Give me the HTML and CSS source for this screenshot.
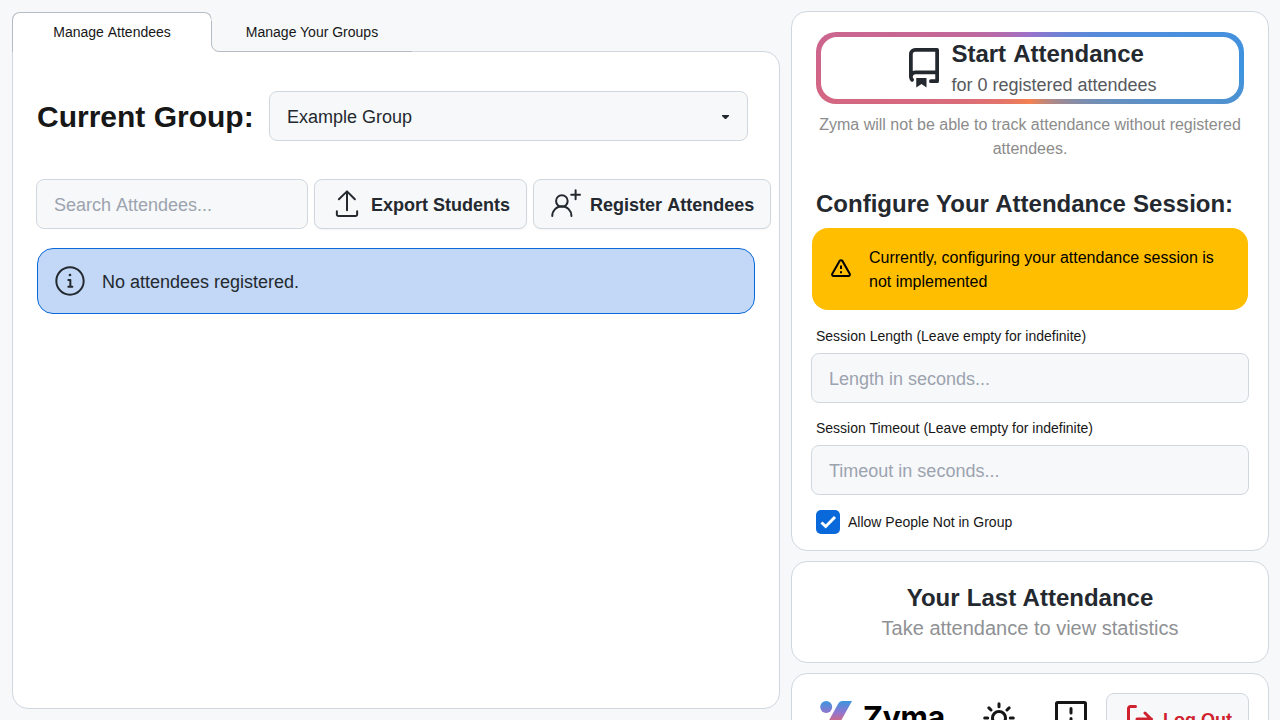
FILE: index.html
```html
<!DOCTYPE html>
<html lang="en">
<head>
<meta charset="utf-8">
<title>Zyma</title>
<link rel="stylesheet" href="styles.css">
</head>
<body>
<main class="main">
  <nav class="tabs">
    <a class="tab tab-active">Manage Attendees<svg class="tab-curve" width="10" height="40"><path d="M0 0V40H10V39.5H8A7.5 7.5 0 0 1 .5 32V0Z" fill="#fff"/><path d="M.5 9V32A7.5 7.5 0 0 0 8 39.5H10" fill="none" stroke="#b6bcc3"/></svg></a>
    <a class="tab tab-plain">Manage Your Groups</a>
  </nav>
  <section class="panel attendees">
    <div class="group-row">
      <h1 class="group-title">Current Group:</h1>
      <div class="field select">Example Group<svg width="8" height="5"><path d="M0 0H7V1L4 4H3L0 1Z" fill="#24292f"/></svg></div>
    </div>
    <div class="toolbar">
      <input class="field search" placeholder="Search Attendees...">
      <button class="btn export"><svg class="icon32" viewBox="0 0 24 24"><path d="M12 15.900V2.100M5.900 7.700 12 1.800l5.9 5.9M4.400 16.600v2.500a1.2 1.2 0 0 0 1.2 1.2h12.800a1.2 1.2 0 0 0 1.2-1.2V16.600"/></svg>Export Students</button>
      <button class="btn register"><svg class="icon32" viewBox="0 0 24 24"><circle cx="8.9" cy="9" r="4.35"/><path d="M1.700 20.2a7.2 7.2 0 0 1 14.4 0M19.200 1v6.6M15.900 4.3h6.6"/></svg>Register Attendees</button>
    </div>
    <div class="info">
      <svg width="32" height="32" viewBox="0 0 24 24" fill="#24292f"><path d="M13 7.5a1 1 0 1 1-2 0 1 1 0 0 1 2 0Zm-3 3.75a.75.75 0 0 1 .75-.75h1.5a.75.75 0 0 1 .75.75v4.25h.75a.75.75 0 0 1 0 1.5h-3a.75.75 0 0 1 0-1.5h.75V12h-.75a.75.75 0 0 1-.75-.75Z"/><path d="M12 1c6.075 0 11 4.925 11 11s-4.925 11-11 11S1 18.075 1 12 5.925 1 12 1ZM2.5 12a9.5 9.5 0 0 0 9.5 9.5 9.5 9.5 0 0 0 9.5-9.5A9.5 9.5 0 0 0 12 2.5 9.5 9.5 0 0 0 2.5 12Z"/></svg>
      <span class="info-text">No attendees registered.</span>
    </div>
  </section>
</main>
<aside class="side">
  <section class="panel session">
    <div class="start-ring">
      <button class="start">
        <svg width="40" height="40" viewBox="0 0 16 16" fill="#24292f"><path d="M2 2.5A2.5 2.5 0 0 1 4.5 0h8.75a.75.75 0 0 1 .75.75v12.5a.75.75 0 0 1-.75.75h-2.5a.75.75 0 0 1 0-1.5h1.75v-2h-8a1 1 0 0 0-.714 1.7.75.75 0 1 1-1.072 1.05A2.495 2.495 0 0 1 2 11.5Zm10.5-1h-8a1 1 0 0 0-1 1v6.708A2.486 2.486 0 0 1 4.5 9h8ZM4.900 12H9v3.750L7 14.400 4.900 15.750Z"/></svg>
        <span class="start-text"><b class="start-title">Start Attendance</b><span class="start-sub">for 0 registered attendees</span></span>
      </button>
    </div>
    <p class="note">Zyma will not be able to track attendance without registered attendees.</p>
    <h2 class="session-title">Configure Your Attendance Session:</h2>
    <div class="warning">
      <svg width="24" height="24" viewBox="0 0 24 24" fill="none" stroke="#000" stroke-width="2"><path d="M10.6 3.900 3.3 16.700c-.6 1.1.1 2.2 1.2 2.2h15c1.1 0 1.8-1.1 1.2-2.2L13.4 3.900c-.7-1-2.1-1-2.8 0Z"/><path d="M12 8.500v3.500M12 14.300v2"/></svg>
      <span class="warning-text">Currently, configuring your attendance session is not implemented</span>
    </div>
    <label class="label">Session Length (Leave empty for indefinite)</label>
    <input class="field wide" placeholder="Length in seconds...">
    <label class="label">Session Timeout (Leave empty for indefinite)</label>
    <input class="field wide" placeholder="Timeout in seconds...">
    <label class="check"><svg width="24" height="24"><rect width="24" height="24" rx="5" fill="#0969da"/><path d="m5.5 12.5 4.2 4L19 7" fill="none" stroke="#fff" stroke-width="3"/></svg>Allow People Not in Group</label>
  </section>
  <section class="panel last">
    <h2 class="last-title">Your Last Attendance</h2>
    <p class="last-sub">Take attendance to view statistics</p>
  </section>
  <footer class="panel footer">
    <svg class="logo" width="32" height="32" viewBox="0 0 32 32"><defs><linearGradient id="g" gradientUnits="userSpaceOnUse" x1="0" y1="0" x2="0" y2="32"><stop offset="0" stop-color="#3a96de"/><stop offset=".36" stop-color="#9076cf"/><stop offset=".62" stop-color="#d06a88"/><stop offset="1" stop-color="#f38151"/></linearGradient></defs><circle cx="6.2" cy="6" r="6" fill="url(#g)"/><path d="M22 0H32L17 27Q14 32 9 32H2L18 3Q19.500 0 22 0Z" fill="url(#g)"/></svg>
    <span class="brand">Zyma</span>
    <svg class="sun" width="32" height="32" viewBox="0 0 32 32" fill="none" stroke="#171717" stroke-width="3" stroke-linecap="round"><circle cx="16" cy="16" r="6.500"/><path d="M16 1.700v3M16 27.300v3M1.700 16h3M27.300 16h3M5.900 5.900 8 8M24 24l2.100 2.100M26.100 5.900 24 8M8 24l-2.100 2.100"/></svg>
    <svg class="report" width="32" height="32" viewBox="0 0 32 32" fill="none" stroke="#171717" stroke-width="3" stroke-linejoin="round"><path d="M2.500 1.500H29.500a1 1 0 0 1 1 1V24.500H15L9 30V24.500H1.500V2.500a1 1 0 0 1 1-1Z"/><path d="M16 7.500v4.500M16 17.500v1" stroke-linecap="round"/></svg>
    <button class="btn logout"><svg width="32" height="32" viewBox="0 0 32 32" fill="none" stroke="#cf222e" stroke-width="3" stroke-linecap="round" stroke-linejoin="round"><path d="M12.500 3.500H7.500a2 2 0 0 0-2 2v21a2 2 0 0 0 2 2H12.500M14 16h14.500M22 10l6 6-6 6"/></svg><span class="logout-text">Log Out</span></button>
  </footer>
</aside>
</body>
</html>
```
FILE: styles.css
```css
* { box-sizing: border-box; }
html { overflow: hidden; }
body {
  margin: 0;
  height: 720px;
  overflow: hidden;
  display: flex;
  align-items: flex-start;
  gap: 11px;
  padding: 11px 11px 0 12px;
  background: #f6f8fa;
  color: #171717;
  font-family: "Liberation Sans", Arial, sans-serif;
  font-size: 14px;
}
svg { flex: none; display: block; }
h1, h2, p { margin: 0; }
input, button { font-family: inherit; margin: 0; }
.main { width: 768px; padding-top: 1px; }
.panel { background: #fff; border: 1px solid #d0d7de; border-radius: 16px; }
.tabs { display: flex; height: 39px; }
.tab {
  width: 200px;
  height: 40px;
  display: flex;
  align-items: center;
  justify-content: center;
  position: relative;
  z-index: 1;
}
.tab-active {
  background: #fff;
  border: 1px solid #b6bcc3;
  border-bottom: 0;
  border-radius: 8px 8px 0 0;
  padding-bottom: 1px;
  word-spacing: .8px;
}
.tab-curve { position: absolute; left: 198px; top: -1px; }
.tab-plain { border-bottom: 1px solid #b6bcc3; padding-top: 1px; clip-path: inset(0 0 0 9px); }
.attendees { height: 658px; border-top-left-radius: 0; padding: 39px 8px 0 23px; }
.group-row { display: flex; align-items: center; gap: 15px; padding-left: 1px; }
.group-title { font-size: 30px; line-height: 36px; padding-top: 2px; width: 217px; white-space: nowrap; }
.field {
  height: 50px;
  background: #f6f8fa;
  border: 1px solid #d0d7de;
  border-radius: 8px;
  padding: 2px 17px 0;
  font-size: 18px;
  color: #24292f;
}
.field::placeholder { color: #9ca3af; opacity: 1; }
.select { width: 479px; display: flex; align-items: center; justify-content: space-between; }
.toolbar { display: flex; gap: 6px; margin-top: 38px; }
.search { width: 272px; word-spacing: 1px; }
.btn {
  display: flex;
  align-items: center;
  height: 50px;
  background: #f6f8fa;
  border: 1px solid #d0d7de;
  border-radius: 8px;
  padding: 2px 16px 0;
  gap: 8px;
  font-size: 18px;
  font-weight: bold;
  color: #24292f;
  white-space: nowrap;
  box-shadow: 0 1px 2px rgba(0, 0, 0, .05);
}
.icon32 {
  width: 32px;
  height: 32px;
  fill: none;
  stroke: #24292f;
  stroke-width: 1.5;
  stroke-linecap: round;
  stroke-linejoin: round;
}
.export { width: 213px; }
.register { width: 238px; word-spacing: 1px; }
.info {
  display: flex;
  align-items: center;
  gap: 16px;
  width: 718px;
  height: 66px;
  margin: 19px 0 0 1px;
  padding: 0 16px;
  background: #c2d8f6;
  border: 1px solid #0969da;
  border-radius: 16px;
  font-size: 18px;
  color: #24292f;
}
.info-text { padding-top: 2px; }
.side { width: 478px; display: grid; gap: 10px; }
.session { height: 540px; padding: 20px 19px 0; }
.start-ring {
  height: 72px;
  margin: 0 5px;
  padding: 5px;
  border-radius: 20px;
  background: conic-gradient(#9b72cb, #3c94e0 25%, #f38151 50%, #d06488 75%, #9b72cb);
}
.start {
  width: 100%;
  height: 62px;
  display: flex;
  align-items: center;
  justify-content: center;
  gap: 7px;
  padding: 0 0 0 1px;
  border: 0;
  border-radius: 16px;
  background: #fff;
  color: #24292f;
  text-align: left;
}
.start-text { display: grid; padding-top: 2px; }
.start-title { font-size: 24px; line-height: 32px; word-spacing: 1.3px; }
.start-sub { font-size: 18px; line-height: 30px; color: #57595d; }
.note { margin-top: 9px; text-align: center; font-size: 16px; line-height: 24px; color: #8b8b8b; }
.session-title { margin: 27px 0 0 5px; font-size: 24px; line-height: 32px; color: #24292f; white-space: nowrap; word-spacing: .5px; }
.warning {
  display: flex;
  align-items: center;
  gap: 16px;
  height: 82px;
  margin: 8px 1px 0;
  padding: 0 17px;
  background: #ffbe00;
  color: #000;
  border-radius: 16px;
  font-size: 16px;
  line-height: 24px;
}
.warning-text { padding-top: 2px; }
.label { display: block; height: 43px; padding: 16px 5px 0; line-height: 20px; }
.wide { display: block; width: 438px; }
.wide + .label { height: 42px; padding-top: 15px; }
.check { display: flex; align-items: center; gap: 8px; margin: 15px 0 0 5px; }
.last { height: 102px; padding-top: 20px; text-align: center; }
.last-title { font-size: 24px; line-height: 32px; color: #24292f; word-spacing: .6px; }
.last-sub { font-size: 20px; line-height: 28px; color: #8f9194; }
.footer { height: 92px; display: flex; align-items: flex-start; padding: 19px 19px 0 28px; }
.logo { margin-top: 8px; }
.brand { margin: 6px 0 0 11px; width: 82px; font-family: Inter, sans-serif; font-size: 30px; line-height: 36px; font-weight: 700; letter-spacing: -.2px; color: #000; }
.sun { margin: 9px 0 0 38px; }
.report { margin: 8px 0 0 40px; }
.logout { margin-left: auto; width: 143px; color: #cf222e; box-shadow: none; }
.logout-text { padding-top: 2px; }
```
